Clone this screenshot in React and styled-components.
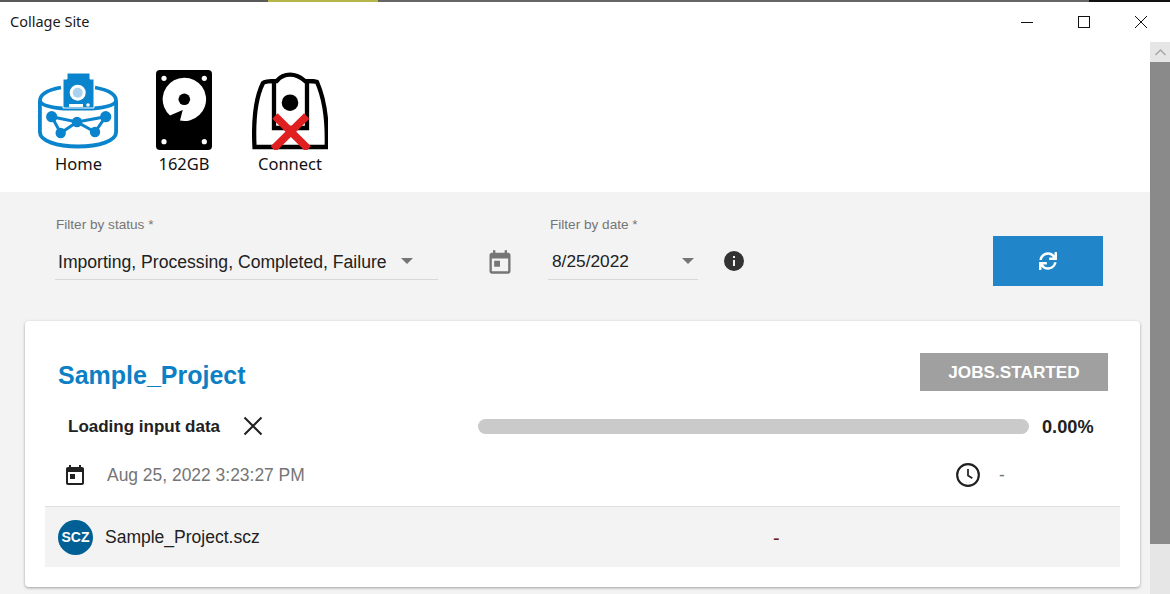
import React from 'react';
import styled, { createGlobalStyle } from 'styled-components';
import { FaSync } from 'react-icons/fa';

const Global = createGlobalStyle`
  html, body { margin: 0; padding: 0; height: 594px; overflow: hidden; background: #fff; }
  #root { height: 594px; }
  * { box-sizing: border-box; }
`;

const Window = styled.div`
  width: 1170px; height: 594px; display: flex; flex-direction: column; overflow: hidden;
  font-family: "Liberation Sans", Roboto, sans-serif; color: #212121; background: #fff;
`;
const TopStrip = styled.div`
  height: 2px; flex: none; display: flex;
`;
const StripPart = styled.div`
  height: 2px; flex: ${p => p.$grow ? 1 : 'none'}; width: ${p => p.$w || 0}px; background: ${p => p.$c};
`;
const TitleBar = styled.div`
  height: 40px; flex: none; display: flex; align-items: center; justify-content: space-between;
  padding-left: 10px;
`;
const TitleText = styled.div`
  font-family: "Noto Sans", "Open Sans", sans-serif; font-size: 14.5px; color: #1a1a1a; margin-top: -2px;
`;
const WinButtons = styled.div`
  display: flex; align-items: center; margin-top: -1px; padding-right: 1px;
`;
const WinButton = styled.div`
  width: 57px; height: 30px; display: flex; align-items: center; justify-content: center;
`;
const Body = styled.div`
  flex: 1; display: flex; min-height: 0;
`;
const Main = styled.div`
  flex: 1; display: flex; flex-direction: column; min-width: 0;
`;
const Toolbar = styled.div`
  height: 150px; flex: none; display: flex; padding: 28px 0 0 33px; background: #fff;
`;
const ToolItem = styled.div`
  width: ${p => p.$w}px; display: flex; flex-direction: column; align-items: center;
`;
const ToolIcon = styled.div`
  height: 80px; display: flex; align-items: flex-start; justify-content: center;
`;
const ToolLabel = styled.div`
  font-family: "Noto Sans", "Open Sans", sans-serif; font-size: 16.5px; line-height: 22px; color: #111;
  margin: 3px 0 0 ${p => p.$ml || 0}px;
`;
const Content = styled.div`
  flex: 1; background: #f3f3f3; padding: 0 10px 0 25px; display: flex; flex-direction: column;
`;
const Filters = styled.div`
  height: 129px; flex: none; display: flex; align-items: flex-start;
`;
const Field = styled.div`
  width: ${p => p.$w}px; margin-left: ${p => p.$ml}px; margin-top: 24px; flex: none;
`;
const FieldLabel = styled.div`
  font-size: 13.6px; line-height: 18px; color: #757575; padding-left: ${p => p.$pl}px;
`;
const Select = styled.div`
  height: 46px; display: flex; align-items: flex-end; justify-content: space-between;
  border-bottom: 1px solid #d8d8d8; padding: 0 ${p => p.$pr}px ${p => p.$pb}px ${p => p.$pl}px;
  font-size: ${p => p.$fs}px; line-height: 20px; color: #212121;
`;
const Caret = styled.span`
  width: 0; height: 0; border-left: 6.5px solid transparent; border-right: 6.5px solid transparent;
  border-top: 6.5px solid #757575; flex: none; margin-bottom: ${p => p.$mb}px;
`;
const IconSlot = styled.div`
  flex: none; margin-left: ${p => p.$ml}px; margin-top: ${p => p.$mt}px; display: flex;
`;
const RefreshButton = styled.button`
  width: 110px; height: 50px; flex: none; margin-left: ${p => p.$ml}px; margin-top: 44px; border: 0; padding: 0;
  background: #2086c9; color: #fff; display: flex; align-items: center; justify-content: center;
`;
const Card = styled.div`
  width: 1115px; height: 266px; flex: none; background: #fff; border-radius: 4px;
  box-shadow: 0 1px 3px rgba(0,0,0,.35); padding: 32px 20px 0 20px; display: flex; flex-direction: column;
`;
const CardHeader = styled.div`
  height: 38px; flex: none; display: flex; justify-content: space-between; align-items: center;
  padding: 0 12px 0 13px;
`;
const ProjectTitle = styled.div`
  font-size: 25px; font-weight: 700; color: #0c7fc5; padding-top: 6px;
`;
const StatusBadge = styled.div`
  width: 188px; height: 38px; background: #a0a0a0; color: #fff; font-size: 17.2px; font-weight: 700;
  display: flex; align-items: center; justify-content: center; padding-top: 1px;
`;
const ProgressRow = styled.div`
  height: 44px; flex: none; display: flex; align-items: center; margin-top: 13px; padding-left: 23px;
`;
const StepName = styled.div`
  width: 173px; flex: none; font-size: 17px; font-weight: 700; color: #212121; padding-top: 1px;
`;
const CloseSlot = styled.div`
  flex: none; display: flex; width: 237px;
`;
const Track = styled.div`
  width: 551px; height: 15px; flex: none; border-radius: 8px; background: #cacaca;
`;
const Percent = styled.div`
  margin-left: 13px; font-size: 18.2px; font-weight: 700; color: #212121; padding-top: 3px;
`;
const DateRow = styled.div`
  height: 58px; flex: none; display: flex; align-items: center; padding: 0 0 4px 18px;
`;
const DateText = styled.div`
  width: 848px; flex: none; margin-left: 20px; font-size: 17.45px; color: #757575; padding-top: 1px;
`;
const Dash = styled.div`
  margin-left: 18px; font-size: 17.5px; color: #757575;
`;
const FileRow = styled.div`
  height: 61px; flex: none; background: #f3f3f3; border-top: 1px solid #e0e0e0;
  display: flex; align-items: center; padding-left: 13px;
`;
const Avatar = styled.div`
  width: 35px; height: 35px; flex: none; border-radius: 50%; background: #005f94; color: #fff;
  font-size: 14px; font-weight: 700; display: flex; align-items: center; justify-content: center;
`;
const FileName = styled.div`
  width: 668px; flex: none; margin-left: 12px; font-size: 17.5px; color: #212121; padding-top: 1px;
`;
const FileDash = styled.div`
  font-size: 20px; color: #6b2020; padding-top: 2px;
`;
const Scrollbar = styled.div`
  width: 20px; flex: none; background: #e6e6e6; display: flex; flex-direction: column;
`;
const ScrollArrow = styled.div`
  height: 20px; display: flex; align-items: center; justify-content: center;
`;
const ScrollThumb = styled.div`
  height: 482px; background: #8a8a8a;
`;

const HomeIcon = () => (
  <svg width="80" height="80" viewBox="0 -2 80 80">
    <g fill="none" stroke="#0a84cc" strokeWidth="3.8">
      <path d="M23 15.5 C9 18 1.9 23 1.9 29 L1.9 60 C1.9 69 19 74.5 40 74.5 C61 74.5 78.1 69 78.1 60 L78.1 29 C78.1 23 71 18 57 15.5" />
      <path d="M1.9 29 C3 33 12 35.5 26 36.5 L54 36.5 C68 35.5 77 33 78.1 29" />
    </g>
    <g fill="none" stroke="#0a84cc" strokeWidth="3">
      <path d="M13.7 44.7 L39 50 L67.7 44.7 L57 60 L39 50 L22.7 61 Z" />
    </g>
    <path d="M29 1 H52 V7 H56 V36 H25 V7 H29 Z" fill="#0a84cc" stroke="#fff" strokeWidth="1" />
    <circle cx="39.7" cy="20.7" r="8" fill="#fff" />
    <circle cx="39.7" cy="20.7" r="5" fill="#a9d2ee" />
    <rect x="31" y="32" width="14" height="3" fill="#fff" />
    <circle cx="50" cy="33" r="1.8" fill="#fff" />
    <g fill="#0a84cc">
      <circle cx="13.7" cy="44.7" r="5.6" /><circle cx="39" cy="50" r="5.2" /><circle cx="67.7" cy="44.7" r="5.6" />
      <circle cx="22.7" cy="61" r="5.2" /><circle cx="57" cy="60" r="5.2" />
    </g>
  </svg>
);
const DiskIcon = () => (
  <svg width="56" height="80" viewBox="0 0 56 80">
    <rect width="56" height="80" rx="4" fill="#000" />
    <g fill="#fff">
      <circle cx="8" cy="8.3" r="2.6" /><circle cx="48.3" cy="8.3" r="2.6" />
      <circle cx="8" cy="71.7" r="2.6" /><circle cx="48.3" cy="71.7" r="2.6" />
      <path d="M14 45.6 A21.7 21.7 0 1 1 24 50.6 L26.7 40 Z" />
    </g>
    <circle cx="28.3" cy="29.3" r="5.8" fill="#000" />
  </svg>
);
const ScannerIcon = () => (
  <svg width="76" height="80" viewBox="0 -2 76 80">
    <g fill="none" stroke="#000" strokeWidth="4.3">
      <path d="M2.5 75 C1.5 55 1.5 30 11 11 Q13 9 24.7 9 Q30 2.7 38 2.7 Q46 2.7 53 9 Q63 9 65 10 C73 28 75.5 50 74.7 75 Z" />
      <path d="M22 9 V56 H55 V9" />
    </g>
    <circle cx="38" cy="30.7" r="8.3" fill="#000" />
    <path d="M23 44 L56.3 77 M54.7 44 L21.3 77" stroke="#e02020" strokeWidth="7.5" fill="none" />
  </svg>
);
const CalendarIcon = ({ size, color }) => (
  <svg width={size} height={size} viewBox="0 0 24 24" fill={color}>
    <path d="M19 4h-1V2h-2v2H8V2H6v2H5c-1.1 0-2 .9-2 2v14c0 1.1.9 2 2 2h14c1.1 0 2-.9 2-2V6c0-1.1-.9-2-2-2zm0 16H5V9h14v11zM7 11h5v5H7z" />
  </svg>
);

export default function App() {
  return (
    <Window>
      <Global />
      <TopStrip>
        <StripPart $w={268} $c="#5a5a5a" />
        <StripPart $w={110} $c="#b5b548" />
        <StripPart $w={711} $c="#666" />
        <StripPart $grow $c="#111" />
      </TopStrip>
      <TitleBar>
        <TitleText>Collage Site</TitleText>
        <WinButtons>
          <WinButton><svg width="12" height="12"><path d="M0 6.5H12" stroke="#111" /></svg></WinButton>
          <WinButton><svg width="12" height="12"><rect x=".5" y=".5" width="11" height="11" fill="none" stroke="#111" /></svg></WinButton>
          <WinButton><svg width="12" height="12"><path d="M0 0L12 12M12 0L0 12" stroke="#111" /></svg></WinButton>
        </WinButtons>
      </TitleBar>
      <Body>
        <Main>
          <Toolbar>
            <ToolItem $w={90}><ToolIcon><HomeIcon /></ToolIcon><ToolLabel $ml={1}>Home</ToolLabel></ToolItem>
            <ToolItem $w={122}><ToolIcon><DiskIcon /></ToolIcon><ToolLabel>162GB</ToolLabel></ToolItem>
            <ToolItem $w={90}><ToolIcon><ScannerIcon /></ToolIcon><ToolLabel>Connect</ToolLabel></ToolItem>
          </Toolbar>
          <Content>
            <Filters>
              <Field $w={383} $ml={30}>
                <FieldLabel $pl={1}>Filter by status *</FieldLabel>
                <Select $pb={7} $pr={25} $pl={3} $fs={17.6}>Importing, Processing, Completed, Failure<Caret $mb={8} /></Select>
              </Field>
              <IconSlot $ml={48} $mt={56}><CalendarIcon size={28} color="#757575" /></IconSlot>
              <Field $w={150} $ml={34}>
                <FieldLabel $pl={2}>Filter by date *</FieldLabel>
                <Select $pb={8} $pr={4} $pl={4} $fs={17.3}>8/25/2022<Caret $mb={7} /></Select>
              </Field>
              <IconSlot $ml={24} $mt={57}>
                <svg width="24" height="24" viewBox="0 0 24 24" fill="#333"><path d="M12 2a10 10 0 100 20 10 10 0 000-20zm1 15h-2v-6h2v6zm0-8h-2V7h2v2z" /></svg>
              </IconSlot>
              <RefreshButton $ml={247}><FaSync size={18} /></RefreshButton>
            </Filters>
            <Card>
              <CardHeader>
                <ProjectTitle>Sample_Project</ProjectTitle>
                <StatusBadge>JOBS.STARTED</StatusBadge>
              </CardHeader>
              <ProgressRow>
                <StepName>Loading input data</StepName>
                <CloseSlot><svg width="24" height="24" viewBox="0 0 24 24"><path d="M3.5 3.5L20.5 20.5M20.5 3.5L3.5 20.5" stroke="#212121" strokeWidth="2" fill="none" /></svg></CloseSlot>
                <Track />
                <Percent>0.00%</Percent>
              </ProgressRow>
              <DateRow>
                <CalendarIcon size={24} color="#212121" />
                <DateText>Aug 25, 2022 3:23:27 PM</DateText>
                <svg width="26" height="26" viewBox="0 0 24 24" fill="none" stroke="#212121" strokeWidth="2"><circle cx="12" cy="12" r="10" /><path d="M12 6.5v6l4 2.5" strokeWidth="1.6" /></svg>
                <Dash>-</Dash>
              </DateRow>
              <FileRow>
                <Avatar>SCZ</Avatar>
                <FileName>Sample_Project.scz</FileName>
                <FileDash>-</FileDash>
              </FileRow>
            </Card>
          </Content>
        </Main>
        <Scrollbar>
          <ScrollArrow><svg width="11" height="7"><path d="M.5 6L5.5 1L10.5 6" fill="none" stroke="#a6a6a6" strokeWidth="1.4" /></svg></ScrollArrow>
          <ScrollThumb />
        </Scrollbar>
      </Body>
    </Window>
  );
}
